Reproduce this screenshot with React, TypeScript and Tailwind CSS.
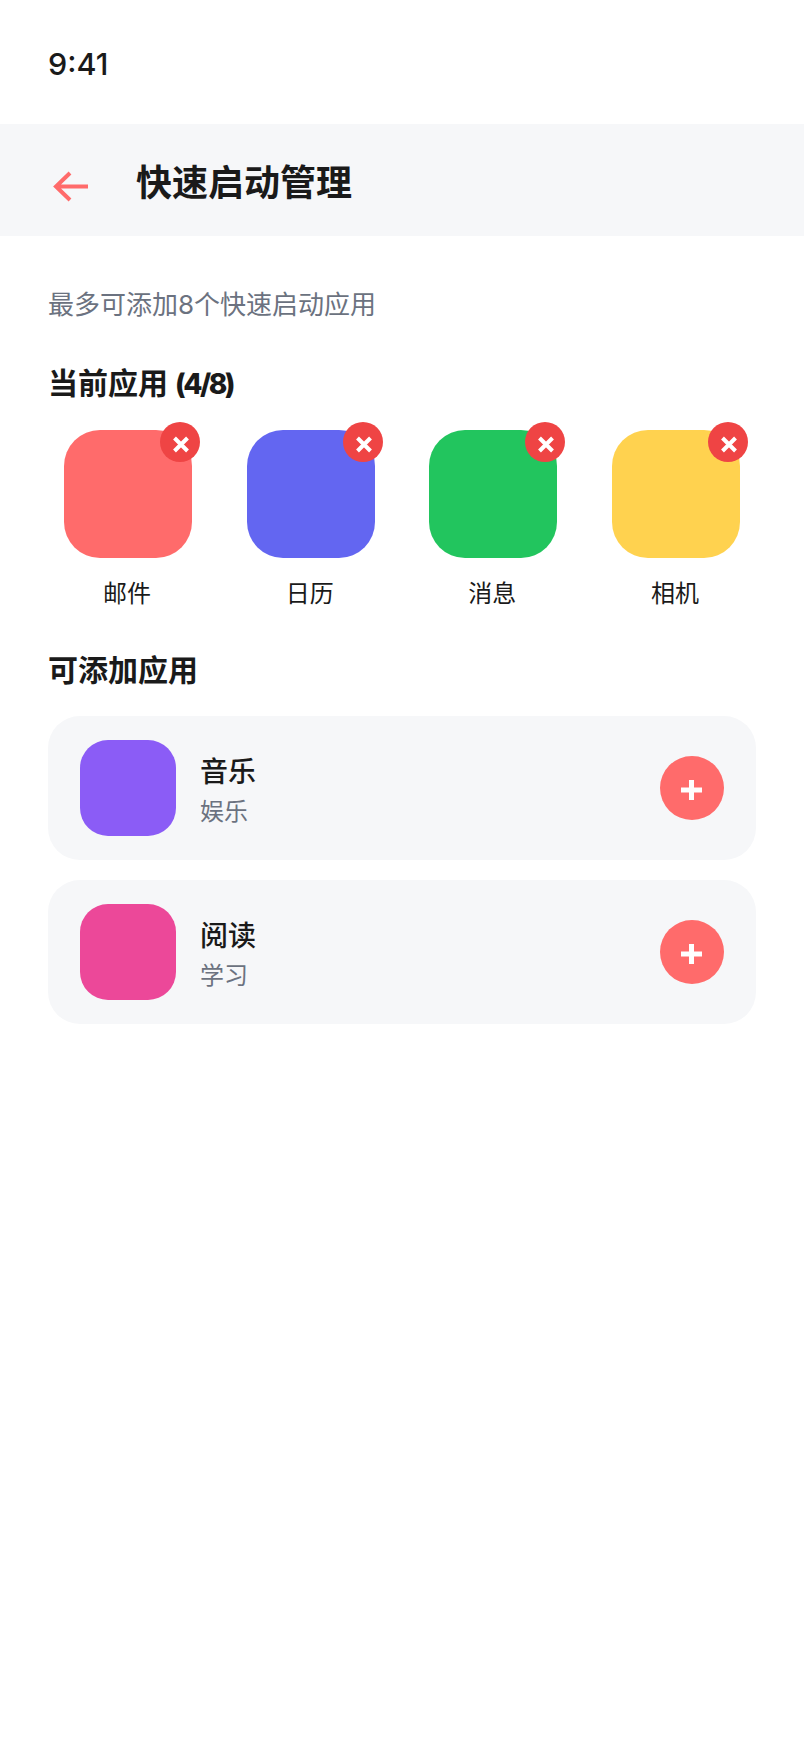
const currentApps = [
  { name: '邮件', color: 'bg-[#ff6b6b]' },
  { name: '日历', color: 'bg-[#6366f1]' },
  { name: '消息', color: 'bg-[#22c55e]' },
  { name: '相机', color: 'bg-[#ffd24f]' },
]

const availableApps = [
  { name: '音乐', category: '娱乐', color: 'bg-[#8b5cf6]' },
  { name: '阅读', category: '学习', color: 'bg-[#ec4899]' },
]

function RemoveBadge() {
  return (
    <div className="absolute -top-2 -right-2 w-10 h-10 rounded-full bg-[#ef4444] flex items-center justify-center">
      <svg width="40" height="40" viewBox="0 0 40 40" fill="none">
        <path d="M14.5 16 L27.5 29 M27.5 16 L14.5 29" stroke="white" strokeWidth="4" />
      </svg>
    </div>
  )
}

export default function App() {
  return (
    <div
      className="w-[804px] h-[1748px] bg-white text-[#1a1a1a]"
      style={{ fontFamily: 'Inter, "Noto Sans CJK SC", sans-serif' }}
    >
      <div className="h-[124px] pl-12 pt-[4px] flex items-center text-[30.5px] font-[550]">9:41</div>

      <div className="h-[112px] bg-[#f6f7f9] pl-[53px] flex items-center">
        <svg width="38" height="32" viewBox="0 0 38 32" fill="none" className="mt-[13px]">
          <path d="M35 15.5 H3 M17 2 L3 15.5 L17 29" stroke="#ff6b6b" strokeWidth="4" />
        </svg>
        <h1 className="ml-[45px] mt-[6px] text-[36px] font-bold">快速启动管理</h1>
      </div>

      <div className="px-12">
        <p className="mt-[53px] text-[26px] leading-[32px] text-[#6b7280]">最多可添加8个快速启动应用</p>

        <h2 className="mt-[42px] text-[30px] leading-[40px] font-bold">
          当前应用 <span className="text-[28px] font-extrabold tracking-[-0.09em]">(4/8)</span>
        </h2>
        <div className="mt-[26px] flex justify-between">
          {currentApps.map((app) => (
            <div key={app.name} className="w-40 flex flex-col items-center">
              <div className={`relative w-32 h-32 rounded-[36px] ${app.color}`}>
                <RemoveBadge />
              </div>
              <span className="mt-5 pr-0.5 text-2xl leading-8">{app.name}</span>
            </div>
          ))}
        </div>

        <h2 className="mt-10 text-[30px] leading-[40px] font-bold">可添加应用</h2>
        <div className="mt-[26px] flex flex-col gap-5">
          {availableApps.map((app) => (
            <div key={app.name} className="h-36 rounded-[32px] bg-[#f6f7f9] px-8 flex items-center">
              <div className={`w-24 h-24 rounded-[28px] ${app.color}`} />
              <div className="ml-6 flex-1 pt-[4px]">
                <div className="text-[28px] leading-[40px] font-medium">{app.name}</div>
                <div className="mt-[4px] text-2xl leading-8 text-[#6b7280]">{app.category}</div>
              </div>
              <div className="w-16 h-16 rounded-full bg-[#ff6b6b] flex items-center justify-center">
                <svg width="64" height="64" viewBox="0 0 64 64" fill="none">
                  <path d="M21 34 H42 M31.5 24 V44" stroke="white" strokeWidth="5" />
                </svg>
              </div>
            </div>
          ))}
        </div>
      </div>
    </div>
  )
}
